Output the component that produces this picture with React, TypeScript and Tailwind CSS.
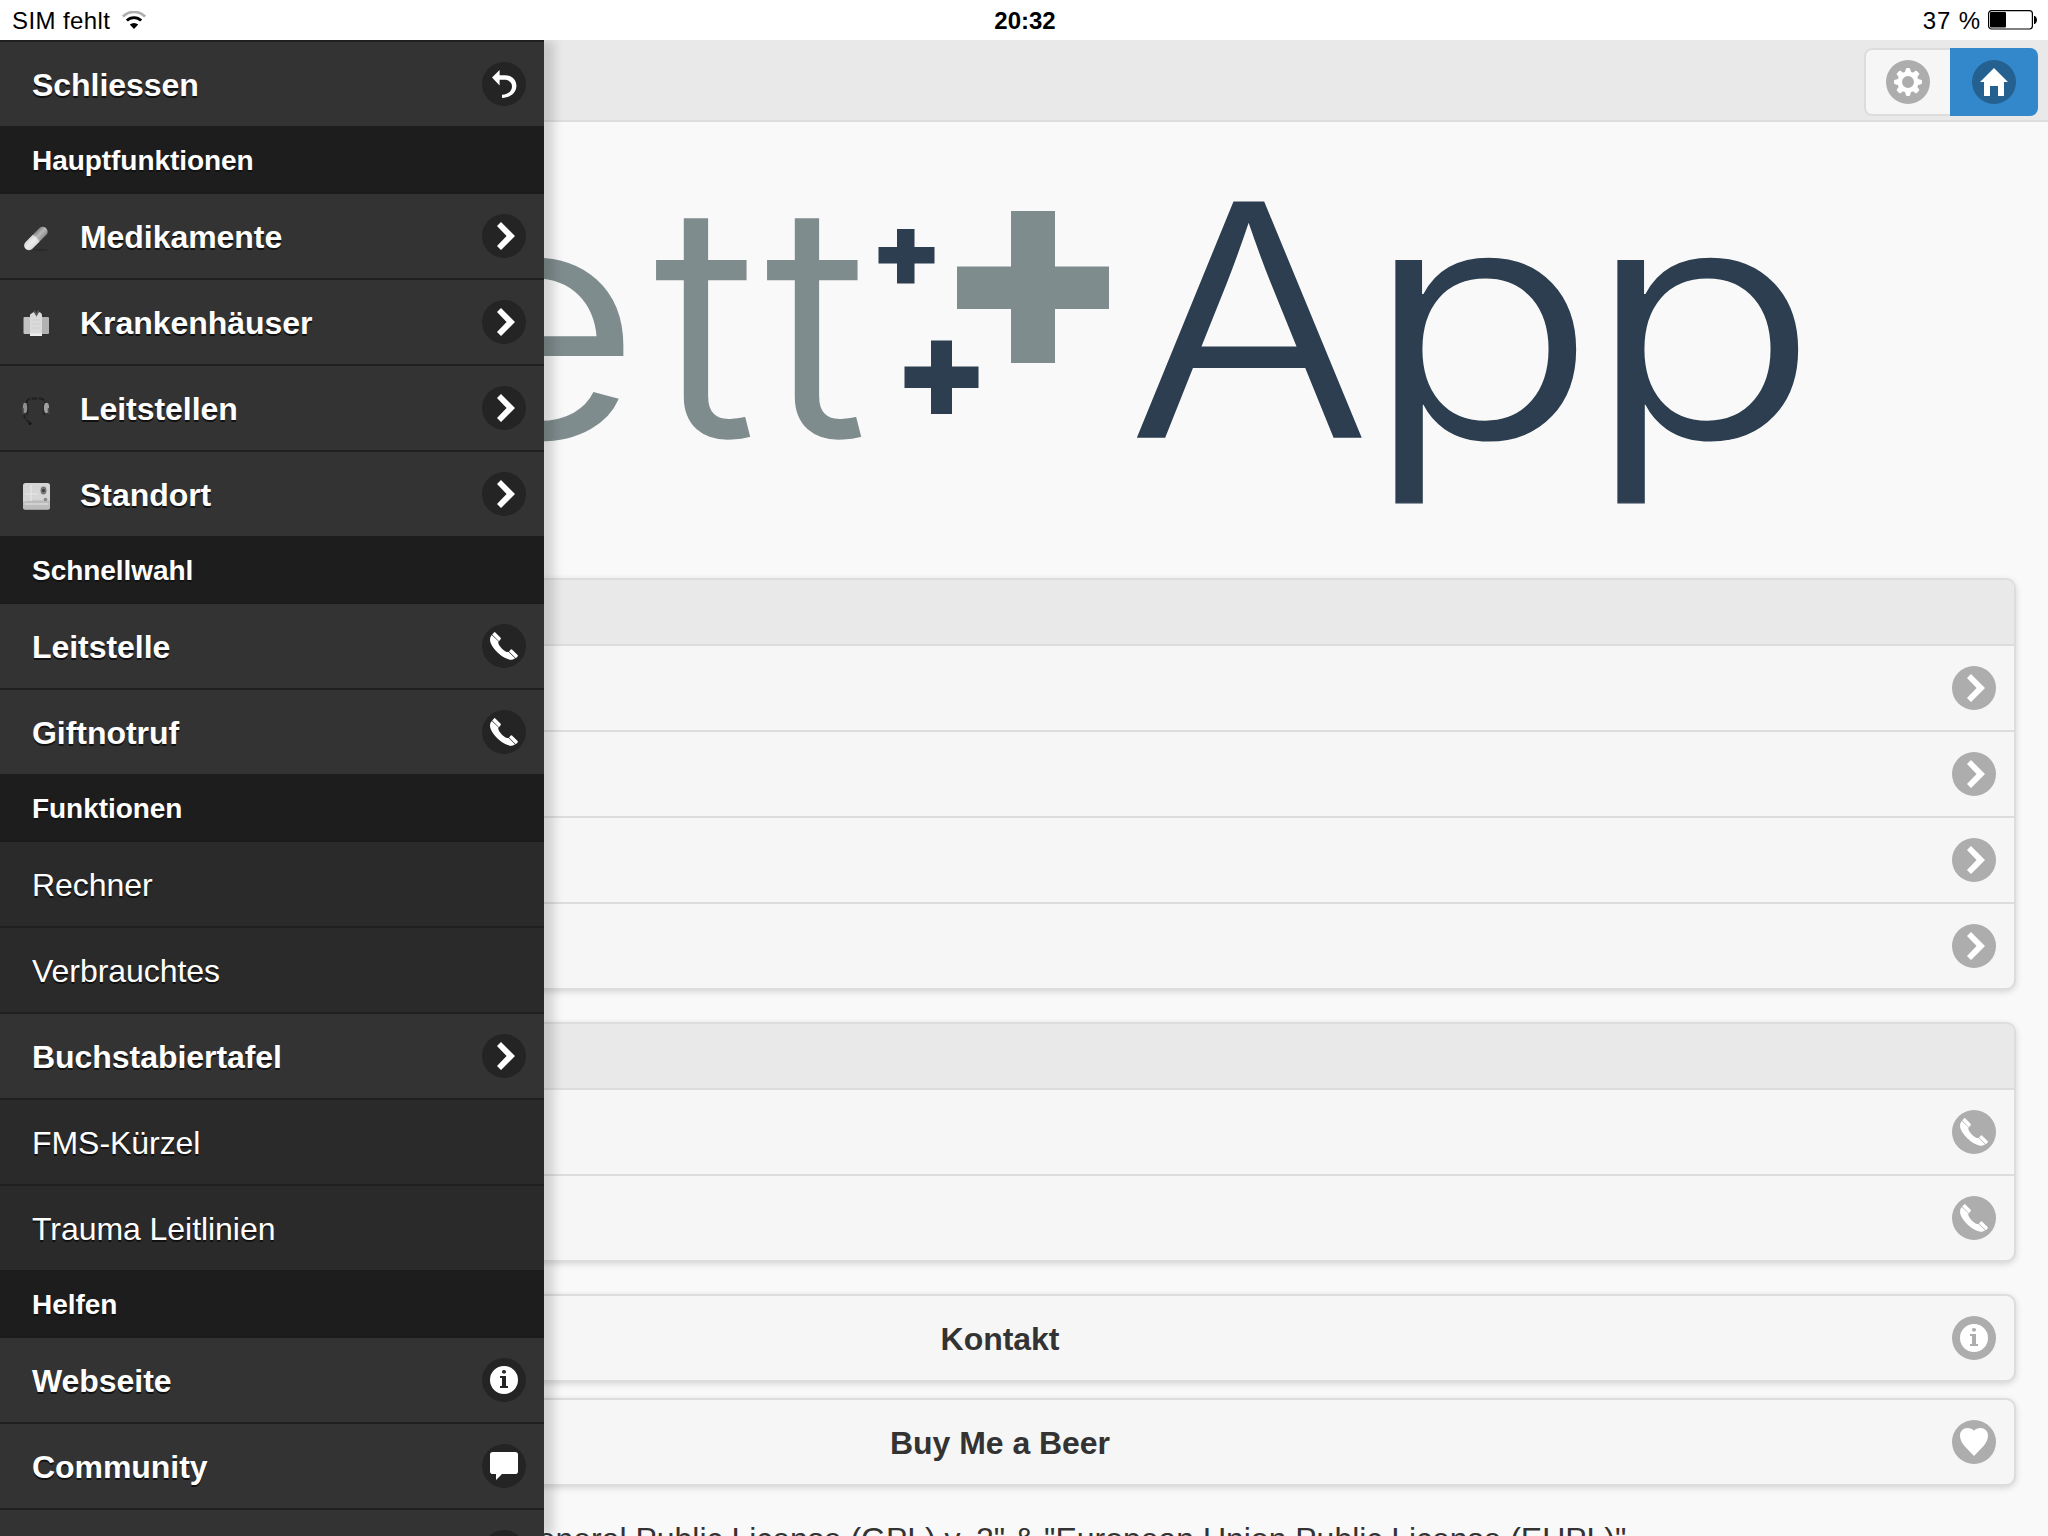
import React from "react";

type IconName = "back" | "carat" | "phone" | "info" | "comment" | "heart" | "gear" | "home";

const glyphs: Record<IconName, React.ReactNode> = {
  back: (
    <path d="M1 3.8 4.8 0V2.6H7.4C11 2.6 13.2 5 13.2 7.9 13.2 11.4 10.3 13.9 6 14V12.4C9 12.2 11 10.5 11 8.2 11 6 9.2 4.9 7.2 4.9H4.8V7.8Z" />
  ),
  carat: <path d="M5.5 0 3.5 2 8.3 7 3.5 12 5.5 14 12.5 7Z" />,
  phone: (
    <>
      <path d="M1.1 1.2 2 .2Q2.3-.1 2.7.2L5.3 2.9Q5.6 3.2 5.3 3.6L4.5 4.6Z" />
      <path d="M.9 1.5 4.3 4.8 4.1 5.4C4.5 7 6.7 9.5 8.5 10L9.3 10 12.5 13.1C11.6 14 10.2 14 8.8 13.5 5 12 1.6 8.5.4 5.6-.3 4 0 2.4.9 1.5Z" />
      <path d="M9.5 9.7 10.4 8.8Q10.7 8.5 11 8.8L13.8 11.5Q14.1 11.9 13.8 12.2L12.9 13.1Z" />
    </>
  ),
  info: (
    <path
      fillRule="evenodd"
      d="M7 0A7 7 0 1 1 7 14 7 7 0 1 1 7 0ZM7 2C6.3 2 6 2.4 6 2.9S6.3 3.8 7 3.8 8 3.4 8 2.9 7.7 2 7 2ZM5 5V6H6V10H5V11H9V10H8V5Z"
    />
  ),
  comment: <path d="M1.4 0H12.6Q14 0 14 1.4V9.6Q14 11 12.6 11H6L3 14V11H1.4Q0 11 0 9.6V1.4Q0 0 1.4 0Z" />,
  heart: (
    <path d="M7 1.4C7.8.4 8.9 0 10.2 0 12.4 0 14 1.6 14 3.8 14 5.8 13.1 7.4 11.8 9L7 14 2.2 9C.9 7.4 0 5.8 0 3.8 0 1.6 1.6 0 3.8 0 5.1 0 6.2.4 7 1.4Z" />
  ),
  gear: (
    <path
      fillRule="evenodd"
      d="M5.9.5Q6.1 0 6.6 0H7.4Q7.9 0 8.1.5L8.5 2Q9.2 2.3 9.7 2.2L10.7 1.4Q11.1 1.2 11.4 1.5L12.5 2.6Q12.8 2.9 12.6 3.3L11.8 4.3Q11.7 4.9 12 5.5L13.5 5.9Q14 6.1 14 6.6V7.4Q14 7.9 13.5 8.1L12 8.5Q11.7 9.1 11.8 9.7L12.6 10.7Q12.8 11.1 12.5 11.4L11.4 12.5Q11.1 12.8 10.7 12.6L9.7 11.8Q9.2 11.7 8.5 12L8.1 13.5Q7.9 14 7.4 14H6.6Q6.1 14 5.9 13.5L5.5 12Q4.8 11.7 4.3 11.8L3.3 12.6Q2.9 12.8 2.6 12.5L1.5 11.4Q1.2 11.1 1.4 10.7L2.2 9.7Q2.3 9.1 2 8.5L.5 8.1Q0 7.9 0 7.4V6.6Q0 6.1.5 5.9L2 5.5Q2.3 4.9 2.2 4.3L1.4 3.3Q1.2 2.9 1.5 2.6L2.6 1.5Q2.9 1.2 3.3 1.4L4.3 2.2Q4.8 2.3 5.5 2ZM7 4A3 3 0 1 0 7 10 3 3 0 1 0 7 4Z"
    />
  ),
  home: <path d="M7 0 0 7H2V14H5V9H9V14H12V7H14Z" />,
};

function Disc({ icon, tone }: { icon?: IconName; tone: string }) {
  return (
    <span className={`flex size-11 shrink-0 items-center justify-center rounded-full ${tone}`}>
      {icon && (
        <svg viewBox="0 0 14 14" className="size-7 fill-white">
          {glyphs[icon]}
        </svg>
      )}
    </span>
  );
}

function PillIcon() {
  return (
    <svg viewBox="0 0 32 32" className="size-8">
      <defs>
        <linearGradient id="pill" x1="0" y1="0" x2="0" y2="1">
          <stop offset="0" stopColor="#8a8a8a" />
          <stop offset="0.45" stopColor="#dcdcdc" />
          <stop offset="1" stopColor="#9a9a9a" />
        </linearGradient>
      </defs>
      <ellipse cx="21" cy="27" rx="8" ry="1.2" fill="#2b2b2b" />
      <g transform="rotate(-45 16 15)">
        <rect x="1" y="10.5" width="29" height="9.5" rx="4.5" fill="url(#pill)" />
        <path d="M16 10.5H6a4.75 4.75 0 0 0 0 9.5H16Z" fill="#f2f2f2" fillOpacity="0.75" />
        <rect x="17" y="10.5" width="13" height="9.5" rx="4.5" fill="#777" fillOpacity="0.35" />
      </g>
    </svg>
  );
}

function HospitalIcon() {
  return (
    <svg viewBox="0 0 32 32" className="size-8">
      <rect x="3.5" y="8" width="8" height="17" rx="1" fill="#c2c2c2" />
      <rect x="21" y="8" width="8" height="17" rx="1" fill="#b2b2b2" />
      <path d="M10 5.5Q13 3 14 3L16.500 7 19 3Q21 3 22 5.500V26H10Z" fill="#dadada" />
      <path d="M12 11h8M12 15h8M12 19h8" stroke="#cecece" strokeWidth="1.2" />
      <path d="M14 1.5l2.5 4.5 2-4.5" stroke="#5a5a5a" strokeWidth="1.5" fill="none" />
      <path d="M10 24.5h12v2.5h-12z" fill="#ededed" />
    </svg>
  );
}

function HeadsetIcon() {
  return (
    <svg viewBox="0 0 32 32" className="size-8">
      <path
        d="M6 8Q8 3.5 11 3.5H20Q24 3.5 26 8"
        fill="none"
        stroke="#1f1f1f"
        strokeWidth="2"
        strokeDasharray="6 1.5"
      />
      <path d="M7.5 9v11M24 9v11" fill="none" stroke="#252525" strokeWidth="2" />
      <path d="M4 20l2 5 5 3" fill="none" stroke="#222" strokeWidth="2.2" strokeDasharray="4 1.5" />
      <ellipse cx="5" cy="13" rx="2.2" ry="5.2" fill="#8f8f8f" />
      <ellipse cx="26.5" cy="13" rx="2.6" ry="5.2" fill="#a0a0a0" />
      <path d="M3 13v6M28.500 13v6" stroke="#4a4a4a" strokeWidth="1.5" />
      <circle cx="10" cy="28.5" r="1.6" fill="#171717" />
    </svg>
  );
}

function MapIcon() {
  return (
    <svg viewBox="0 0 32 32" className="size-8">
      <rect x="3" y="2" width="27" height="26.500" rx="2.5" fill="#d6d6d6" />
      <path d="M3 20.5q12-2 27-1v6.5q0 2.5-2.5 2.5h-22q-2.5 0-2.5-2.500Z" fill="#bcbcbc" />
      <path d="M5 13h13M4.5 23h24M11 4v16" stroke="#e6e6e6" strokeWidth="1.2" />
      <ellipse cx="23.5" cy="9.5" rx="3" ry="4" fill="#777" />
      <circle cx="23.5" cy="9.5" r="1.5" fill="#3c3c3c" />
      <circle cx="25.5" cy="18.5" r="1.8" fill="#8a8a8a" />
    </svg>
  );
}

interface Entry {
  label: string;
  icon?: IconName;
  image?: React.ReactNode;
  link?: boolean;
}

interface Group {
  title?: string;
  entries: Entry[];
}

const menu: Group[] = [
  { entries: [{ label: "Schliessen", icon: "back", link: true }] },
  {
    title: "Hauptfunktionen",
    entries: [
      { label: "Medikamente", icon: "carat", image: <PillIcon />, link: true },
      { label: "Krankenhäuser", icon: "carat", image: <HospitalIcon />, link: true },
      { label: "Leitstellen", icon: "carat", image: <HeadsetIcon />, link: true },
      { label: "Standort", icon: "carat", image: <MapIcon />, link: true },
    ],
  },
  {
    title: "Schnellwahl",
    entries: [
      { label: "Leitstelle", icon: "phone", link: true },
      { label: "Giftnotruf", icon: "phone", link: true },
    ],
  },
  {
    title: "Funktionen",
    entries: [
      { label: "Rechner" },
      { label: "Verbrauchtes" },
      { label: "Buchstabiertafel", icon: "carat", link: true },
      { label: "FMS-Kürzel" },
      { label: "Trauma Leitlinien" },
    ],
  },
  {
    title: "Helfen",
    entries: [
      { label: "Webseite", icon: "info", link: true },
      { label: "Community", icon: "comment", link: true },
      { label: "", link: true },
    ],
  },
];

function MenuRow({ entry }: { entry: Entry }) {
  return (
    <li
      className={`flex h-[86px] items-center border-t-2 border-[#1f1f1f] pr-[18px] ${
        entry.link ? "bg-[#333] font-bold" : "bg-[#2a2a2a]"
      } ${entry.image ? "pl-5" : "pl-8"}`}
    >
      {entry.image && <span className="mt-1.5 mr-7">{entry.image}</span>}
      <span className="flex-1 pt-0.5 text-[32px] leading-10 tracking-[-0.05px]">{entry.label}</span>
      {entry.link && <Disc icon={entry.icon} tone="bg-[#242424]" />}
    </li>
  );
}

function SidePanel() {
  return (
    <nav className="absolute inset-y-0 left-0 w-[544px] overflow-hidden bg-[#2a2a2a] text-white shadow-[10px_0_10px_rgba(0,0,0,0.15)] [text-shadow:0_2px_0_#111]">
      {menu.map((group, i) => (
        <section key={i}>
          {group.title && (
            <h2 className="flex h-[66px] items-center bg-[#1d1d1d] pt-1 pl-8 text-[28px] leading-9 font-bold tracking-[-0.05px]">
              {group.title}
            </h2>
          )}
          <ul className={group.title ? "[&>li:first-child]:border-[#1b1b1b]" : ""}>
            {group.entries.map((entry, j) => (
              <MenuRow key={j} entry={entry} />
            ))}
          </ul>
        </section>
      ))}
    </nav>
  );
}

function StatusBar() {
  return (
    <div className="grid h-10 shrink-0 grid-cols-3 items-center bg-white text-2xl text-black">
      <div className="flex items-center pl-3">
        <span className="pt-0.5 tracking-[0.4px]">SIM fehlt</span>
        <svg viewBox="0 0 24 18" className="ml-3 h-[18px] w-6" fill="none">
          <path d="M.9 5.6A15.5 15.5 0 0 1 23.1 5.6" stroke="#b0b0b0" strokeWidth="2.8" />
          <path d="M4.8 9.6a10.2 10.2 0 0 1 14.4 0" stroke="#000" strokeWidth="2.8" />
          <path d="M12 18 7.8 13.6a6 6 0 0 1 8.4 0Z" fill="#000" />
        </svg>
      </div>
      <div className="pt-0.5 pl-0.5 text-center font-bold">20:32</div>
      <div className="flex items-center justify-end pr-[11px]">
        <span className="mr-[7px] pt-0.5 tracking-[0.9px]">37 %</span>
        <svg viewBox="0 0 49 20" className="h-5 w-[49px]">
          <rect x="0.6" y="0.6" width="43.8" height="18.4" rx="3" fill="none" stroke="#000" strokeWidth="1.2" />
          <rect x="2" y="2" width="16" height="15.6" rx="1" fill="#000" />
          <path d="M46 6h1q2 1.5 2 4t-2 4h-1Z" fill="#000" />
        </svg>
      </div>
    </div>
  );
}

function Logo() {
  return (
    <svg
      viewBox="0 122 2048 456"
      className="block h-[456px] w-full overflow-visible font-light"
      fontFamily="Inter, sans-serif"
      fontSize="326"
    >
      <g fill="#7f8c8d">
        <g stroke="#7f8c8d" strokeWidth="1.5">
          <text transform="translate(425 437) scale(1.15 0.99)">e</text>
          <text transform="translate(654 437) scale(1.05 0.99)">t</text>
          <text transform="translate(765 437) scale(1.05 0.99)">t</text>
        </g>
        <path d="M1011 211h44v55.5h54v42.5h-54v54h-44v-54h-54v-42.5h54Z" />
      </g>
      <g fill="#2c3e50">
        <path d="M897 229h17.5v18h20v16.5h-20v20H897v-20h-18.5V247H897Z" />
        <path d="M931 340.5h21v26h26.5v21.5H952v26h-21v-26h-26.5v-21.5H931Z" />
        <g stroke="#2c3e50" strokeWidth="1.5">
          <text transform="translate(1128 437) scale(1.105 0.99)">A</text>
          <text transform="translate(1364 437) scale(1.185 0.99)">p</text>
          <text transform="translate(1586 437) scale(1.185 0.99)">p</text>
        </g>
      </g>
    </svg>
  );
}

function ListView({ icon, rows }: { icon: IconName; rows: number }) {
  return (
    <div className="overflow-hidden rounded-[10px] border-2 border-[#ddd] bg-[#f6f6f6] shadow-[0_2px_6px_rgba(0,0,0,0.15)]">
      <div className="h-16 bg-[#e9e9e9]" />
      {Array.from({ length: rows }, (_, i) => (
        <div key={i} className="flex h-[86px] items-center justify-end border-t-2 border-[#ddd] pr-[18px]">
          <Disc icon={icon} tone="bg-[#adadad]" />
        </div>
      ))}
    </div>
  );
}

function WideButton({ label, icon }: { label: string; icon: IconName }) {
  return (
    <button className="flex h-[88px] w-full items-center rounded-[10px] border-2 border-[#ddd] bg-[#f6f6f6] pr-[18px] pl-8 font-bold shadow-[0_2px_6px_rgba(0,0,0,0.15)]">
      <span className="mr-[18px] flex-1 pt-0.5 text-center text-[32px] leading-10 tracking-[-0.05px]">{label}</span>
      <Disc icon={icon} tone="bg-[#adadad]" />
    </button>
  );
}

export default function App() {
  return (
    <div className="flex h-[1536px] w-[2048px] flex-col overflow-hidden bg-[#f9f9f9] font-['Liberation_Sans',Arial,sans-serif] text-[#333]">
      <StatusBar />
      <div className="relative flex-1 overflow-hidden">
        <header className="flex h-[82px] justify-end border-b-2 border-[#ddd] bg-[#e9e9e9] pt-2 pr-2.5">
          <button className="flex h-[68px] w-[86px] items-center justify-center rounded-l-lg border-y-2 border-l-2 border-[#ddd] bg-[#f6f6f6]">
            <Disc icon="gear" tone="bg-[#adadad]" />
          </button>
          <button className="flex h-[68px] w-[88px] items-center justify-center rounded-r-lg bg-[#38c]">
            <Disc icon="home" tone="bg-[#246090]" />
          </button>
        </header>
        <Logo />
        <div className="flex flex-col px-8">
          <ListView icon="carat" rows={4} />
          <div className="mt-8">
            <ListView icon="phone" rows={2} />
          </div>
          <div className="mt-8 flex flex-col gap-4">
            <WideButton label="Kontakt" icon="info" />
            <WideButton label="Buy Me a Beer" icon="heart" />
          </div>
          <p className="mt-8 text-center text-[32px] leading-[42px] tracking-[-0.02px] whitespace-nowrap">
            &quot;GNU General Public License (GPL) v. 2&quot; &amp; &quot;European Union Public License (EUPL)&quot;
          </p>
        </div>
        <SidePanel />
      </div>
    </div>
  );
}
